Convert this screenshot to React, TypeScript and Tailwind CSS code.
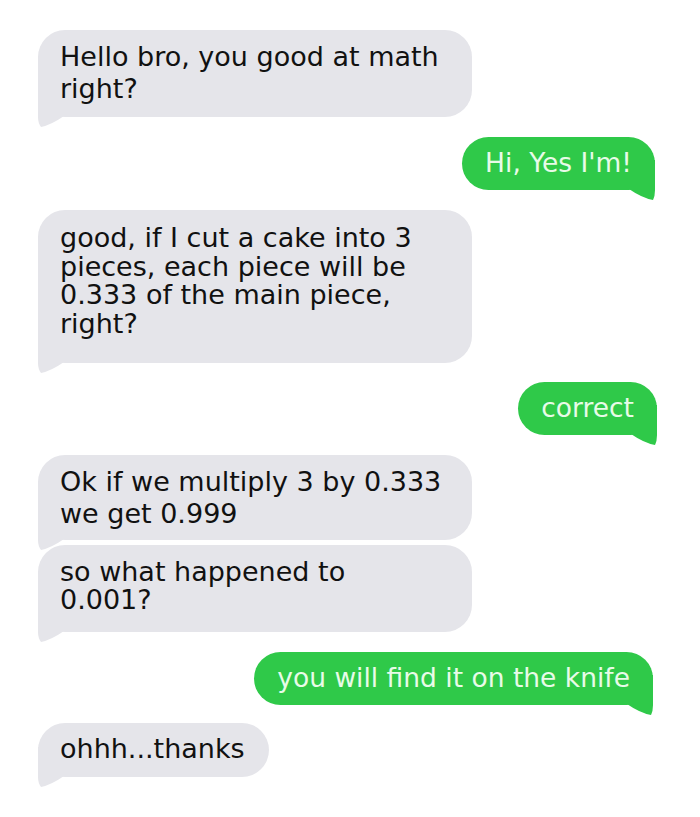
type Msg = {
  from: "them" | "me";
  lines: string[];
  mt: string;
  box: string;
  lead: string;
};

const messages: Msg[] = [
  { from: "them", lines: ["Hello bro, you good at math", "right?"], mt: "mt-0", box: "w-[434px] pt-[11px] pb-[12px]", lead: "leading-[32px]" },
  { from: "me", lines: ["Hi, Yes I'm!"], mt: "mt-[20px] mr-[45px]", box: "pt-[11px] pb-[12px]", lead: "leading-[30px]" },
  {
    from: "them",
    lines: ["good, if I cut a cake into 3", "pieces, each piece will be", "0.333 of the main piece,", "right?"],
    mt: "mt-[20px]",
    box: "w-[434px] pt-[14px] pb-[25px]",
    lead: "leading-[28.5px]",
  },
  { from: "me", lines: ["correct"], mt: "mt-[19px] mr-[43px]", box: "pt-[11px] pb-[12px]", lead: "leading-[30px]" },
  { from: "them", lines: ["Ok if we multiply 3 by 0.333", "we get 0.999"], mt: "mt-[20px]", box: "w-[434px] pt-[11px] pb-[10px]", lead: "leading-[32px]" },
  { from: "them", lines: ["so what happened to", "0.001?"], mt: "mt-[5px]", box: "w-[434px] pt-[13px] pb-[18px]", lead: "leading-[28px]" },
  { from: "me", lines: ["you will find it on the knife"], mt: "mt-[20px] mr-[47px]", box: "pt-[11px] pb-[12px]", lead: "leading-[30px]" },
  { from: "them", lines: ["ohhh...thanks"], mt: "mt-[18px]", box: "pt-[11px] pb-[13px]", lead: "leading-[30px]" },
];

function Tail({ side }: { side: "left" | "right" }) {
  if (side === "left") {
    return (
      <svg width="26" height="40" viewBox="0 0 26 40" className="absolute left-0 bottom-[-10px]">
        <path d="M0 0 L0 30 Q0 36 3 40 Q13 38 26 29 L26 0 Z" fill="#e5e5ea" />
      </svg>
    );
  }
  return (
    <svg width="26" height="40" viewBox="0 0 26 40" className="absolute right-0 bottom-[-10px]">
      <path d="M26 0 L26 30 Q26 36 24 40 Q13 38 0 29 L0 0 Z" fill="#2fc949" />
    </svg>
  );
}

export default function App() {
  return (
    <div className="min-h-[817px] w-[700px] bg-white pt-[30px] pl-[38px] font-['DejaVu_Sans',sans-serif]">
      <div className="flex flex-col">
        {messages.map((m, i) =>
          m.from === "them" ? (
            <div key={i} className={`self-start ${m.mt}`}>
              <div className={`relative rounded-[27px] bg-[#e5e5ea] pl-[22px] pr-[24px] text-[27px] text-[#111] ${m.box} ${m.lead}`}>
                <Tail side="left" />
                <p className="relative">
                  {m.lines.map((l, j) => (
                    <span key={j} className="block whitespace-nowrap">{l}</span>
                  ))}
                </p>
              </div>
            </div>
          ) : (
            <div key={i} className={`self-end ${m.mt}`}>
              <div className={`relative rounded-[27px] bg-[#2fc949] px-[23px] text-[26.5px] text-[#e8fbe8] ${m.box} ${m.lead}`}>
                <Tail side="right" />
                <p className="relative whitespace-nowrap">{m.lines[0]}</p>
              </div>
            </div>
          )
        )}
      </div>
    </div>
  );
}
